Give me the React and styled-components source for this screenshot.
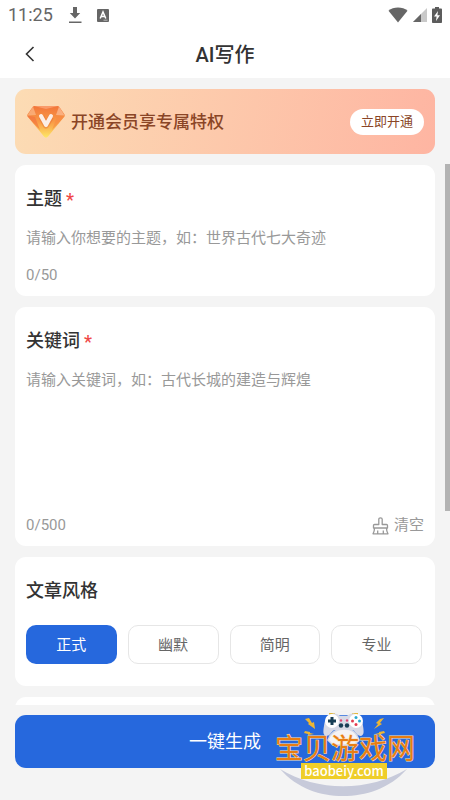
import { useState } from "react";
import styled, { createGlobalStyle } from "styled-components";

const GlobalStyle = createGlobalStyle`
  * {
    box-sizing: border-box;
  }

  body {
    margin: 0;
    font-family: Roboto, "Noto Sans CJK SC", sans-serif;
    color: #333;
  }

  button,
  textarea {
    font-family: inherit;
  }
`;

const Page = styled.div`
  height: 100vh;
  display: flex;
  flex-direction: column;
  background: #f4f4f4;
  overflow: hidden;
`;

const StatusBar = styled.div`
  display: flex;
  align-items: center;
  justify-content: space-between;
  height: 30px;
  padding: 0 8px;
  background: #fff;
  color: #666;
`;

const StatusGroup = styled.div`
  display: flex;
  align-items: center;
  gap: ${({ $gap }) => $gap}px;
`;

const Time = styled.span`
  font-size: 18px;
  line-height: 24px;
`;

const NavBar = styled.header`
  display: grid;
  grid-template-columns: 60px 1fr 60px;
  align-items: center;
  height: 48px;
  background: #fff;
`;

const BackButton = styled.button`
  display: flex;
  align-items: center;
  justify-content: center;
  height: 48px;
  padding: 0;
  border: none;
  background: none;
  color: #333;
`;

const PageTitle = styled.h1`
  margin: 0;
  padding-top: 2px;
  font-size: 20px;
  line-height: 28px;
  font-weight: 500;
  text-align: center;
`;

const Content = styled.main`
  position: relative;
  flex: 1;
  min-height: 0;
  display: flex;
  flex-direction: column;
  gap: 11px;
  padding: 11px 15px 0;
  overflow: hidden;
`;

const ScrollThumb = styled.div`
  position: absolute;
  top: 86px;
  right: 0;
  width: 5px;
  height: 347px;
  background: #b3b3b3;
`;

const Banner = styled.section`
  flex: none;
  display: flex;
  align-items: center;
  height: 65px;
  padding: 0 11px;
  border-radius: 11px;
  background: linear-gradient(100deg, #fcdcb4, #feb5a2);
  color: #8a4526;
`;

const BannerText = styled.span`
  flex: 1;
  margin-left: 5px;
  font-size: 17px;
  line-height: 24px;
  font-weight: 500;
`;

const BannerButton = styled.button`
  height: 26px;
  padding: 0 11px;
  border: none;
  border-radius: 13px;
  background: #fff;
  color: #8a4526;
  font-size: 13px;
  line-height: 20px;
`;

const Card = styled.section`
  flex: none;
  min-height: 60px;
  padding: 22px 11px 10px;
  border-radius: 11px;
  background: #fff;
`;

const CardTitle = styled.h2`
  display: flex;
  align-items: center;
  gap: 4px;
  margin: 0;
  font-size: 18px;
  line-height: 24px;
  font-weight: 500;
`;

const Required = styled.span`
  padding-top: 2px;
  color: #f04848;
  line-height: 22px;
`;

const TextField = styled.textarea`
  display: block;
  width: 100%;
  height: ${({ $height }) => $height}px;
  margin: 16px 0;
  padding: 0;
  border: none;
  outline: none;
  resize: none;
  overflow: hidden;
  background: none;
  color: #333;
  font-size: 15px;
  line-height: 22px;

  &::placeholder {
    color: #999;
  }
`;

const CardFooter = styled.div`
  display: flex;
  align-items: center;
  justify-content: space-between;
  height: 21px;
  color: #999;
  font-size: 15px;
  line-height: 21px;
`;

const ClearButton = styled.button`
  display: flex;
  align-items: center;
  gap: 5px;
  padding: 0;
  border: none;
  background: none;
  color: #999;
  font-size: 15px;
  line-height: 21px;
`;

const StyleGroup = styled.div`
  display: grid;
  grid-template-columns: repeat(4, 1fr);
  gap: 11px;
  padding: 22px 2px 12px 0;
`;

const StyleButton = styled.button`
  height: 39px;
  padding: 0;
  border: ${({ $active }) => ($active ? "none" : "1px solid #e6e6e6")};
  border-radius: 10px;
  background: ${({ $active }) => ($active ? "#2668dd" : "#fff")};
  color: ${({ $active }) => ($active ? "#fff" : "#666")};
  font-size: 15px;
  line-height: 22px;
`;

const BottomBar = styled.footer`
  position: relative;
  flex: none;
  padding: 10px 15px 32px;
`;

const SubmitButton = styled.button`
  display: block;
  width: 100%;
  height: 53px;
  border: none;
  border-radius: 11px;
  background: #2668dd;
  color: #fff;
  font-size: 18px;
  line-height: 24px;
`;

const Watermark = styled.div`
  position: absolute;
  right: 34px;
  bottom: 4px;
  width: 142px;
  height: 90px;
  pointer-events: none;
`;

const LogoText = styled.text`
  font-family: "Noto Sans CJK SC", sans-serif;
`;

function DownloadIcon() {
  return (
    <svg width="14" height="17" viewBox="0 0 14 17" fill="currentColor">
      <path d="M5 0h4v6h3.200L7 11.500 1.800 6H5z" />
      <path d="M1 14.500h12.500V16H1z" />
    </svg>
  );
}

function LanguageIcon() {
  return (
    <svg width="12" height="13" viewBox="0 0 12 13">
      <rect width="12" height="13" rx="1" fill="#666" />
      <path d="M3.200 9.500 6 3l2.800 6.500M4.200 7.500h3.600" fill="none" stroke="#fff" strokeWidth="1.500" />
      <path d="M6.500 11.200h4" stroke="#bbb" strokeWidth="1" />
    </svg>
  );
}

function WifiIcon() {
  return (
    <svg width="20" height="16" viewBox="0 0 20 16">
      <path d="M10 15.500.500 3.800C3 1.600 6.400.500 10 .500s7 1.100 9.500 3.300z" fill="#666" />
    </svg>
  );
}

function SignalIcon() {
  return (
    <svg width="14" height="14" viewBox="0 0 14 14">
      <path d="M14 0v14H0z" fill="#c9c9c9" />
      <path d="M8 6v8H0z" fill="#666" />
    </svg>
  );
}

function BatteryIcon() {
  return (
    <svg width="10" height="16" viewBox="0 0 10 16">
      <path d="M3 0h4v1.600h2.200c.500 0 .8.300.8.800v12.800c0 .500-.300.800-.8.800H.800c-.500 0-.8-.300-.8-.8V2.400c0-.500.300-.8.8-.8H3z" fill="#5c5c5c" />
      <path d="M6 4 2 9.500h2.600L4 14l4-5.800H5.400z" fill="#fff" />
    </svg>
  );
}

function BackIcon() {
  return (
    <svg width="10" height="16" viewBox="0 0 10 16" fill="none" stroke="currentColor" strokeWidth="1.600">
      <path d="M8.500 1 1.500 8l7 7" />
    </svg>
  );
}

function DiamondIcon() {
  return (
    <svg width="40" height="34" viewBox="0 0 40 34">
      <defs>
        <linearGradient id="gem" x1="0" y1="0" x2="0" y2="1">
          <stop offset="0" stopColor="#f2763b" />
          <stop offset="0.500" stopColor="#f99a47" />
          <stop offset="1" stopColor="#fde866" />
        </linearGradient>
      </defs>
      <path d="M8.500 1h23c.8 0 1.400.400 1.900 1l5 7.200c.500.800.500 1.700-.200 2.500L22 31.500c-1.300 1.500-2.700 1.500-4 0L1.800 11.700c-.7-.8-.7-1.700-.2-2.500L6.600 2c.5-.6 1.100-1 1.900-1z" fill="url(#gem)" />
      <path d="M1.400 10.500 9 12l5 13L1.800 11.700z" fill="#f2703f" opacity="0.600" />
      <path d="M38.600 10.500 31 12l-5 13 12.200-13.300z" fill="#f98b45" opacity="0.600" />
      <path d="M7 1.500 10 10l-8.500.500z" fill="#fbb98a" opacity="0.700" />
      <path d="m33 1.500-3 8.500 8.500.500z" fill="#fcc09b" opacity="0.700" />
      <path d="M8 1h24L20 4z" fill="#fa9a69" />
      <path d="m15.500 12 4.500 8.500L25 12" fill="none" stroke="#e0602a" strokeOpacity="0.350" strokeWidth="6" strokeLinejoin="round" />
      <path d="m15 11 5 9 5-9" fill="none" stroke="#fbeee6" strokeWidth="4" strokeLinecap="round" strokeLinejoin="round" />
    </svg>
  );
}

function BroomIcon() {
  return (
    <svg width="17" height="18" viewBox="0 0 17 18" fill="none" stroke="currentColor" strokeWidth="1.300" strokeLinejoin="round">
      <path d="M6.800 7.500V2.300c0-.9.600-1.500 1.700-1.500s1.700.600 1.700 1.500v5.200h4.300c.6 0 1 .400 1 1V11h-14V8.500c0-.6.400-1 1-1z" />
      <path d="M2.500 11c0 2.500-.4 4.200-1.500 5.800h15c-1.100-1.600-1.500-3.300-1.500-5.800M5.700 16.500v-3M11.300 16.500v-3" />
    </svg>
  );
}

function SiteLogo() {
  return (
    <svg width="142" height="90" viewBox="0 0 142 90">
      <circle cx="69" cy="22" r="17" fill="#f0f0ef" opacity="0.250" />
      <path d="M6 63c37 23 89 23 127 0-18 20-41 27-64 27S24 83 6 63z" fill="#c7cada" />
      <path d="M55 8h6M78 8h6" stroke="#e4b93c" strokeWidth="2" />
      <path d="M58 8c3-1 6 0 8 2h7c2-2 5-3 8-2 5 1 7 5 8 12 1 6 1 9-2 10-4 0-5-4-8-6H60c-3 2-4 6-8 6-3-1-3-4-2-10 1-7 3-11 8-12z" fill="#d8dae6" />
      <path d="M54 34c3-8 8-11 16-11s12 3 15 11l-5 5H59z" fill="#f5f3f4" stroke="#d8dae6" strokeWidth="1.500" />
      <circle cx="58" cy="15" r="7" fill="#fff" />
      <circle cx="82" cy="15" r="7" fill="#fff" />
      <path d="M58 11v8M54 15h8" stroke="#183e55" strokeWidth="3" />
      <circle cx="82" cy="11.500" r="1.500" fill="#2aaad0" />
      <circle cx="82" cy="18.500" r="1.500" fill="#e53c50" />
      <circle cx="78.500" cy="15" r="1.500" fill="#df4053" />
      <circle cx="85.500" cy="15" r="1.500" fill="#2aaad0" />
      <circle cx="67" cy="14.500" r="1.200" fill="#df4874" />
      <circle cx="73" cy="14.500" r="1.200" fill="#df4874" />
      <circle cx="67" cy="19.500" r="2.200" fill="#183e55" />
      <circle cx="73" cy="19.500" r="2.200" fill="#183e55" />
      <path
        d="m31 13 4-1 3 5 2-1 1 7-7-5 1-1zM110 12l-4 1-4 4 2 1-4 5 8-5-2-1zM31 25l5 1v1l4 1-6 1v-1l-4-1zM110 25l-5 1v1l-4 1 6 1v-1l4-1z"
        fill="#edb634"
      />
      <LogoText x="1" y="53" fontSize="28" fill="#e87d12" stroke="#f8dfb9" strokeWidth="1" paintOrder="stroke">
        宝贝游戏网
      </LogoText>
      <rect x="27" y="57" width="86" height="16" fill="#efce29" />
      <LogoText x="70" y="70" textAnchor="middle" fontSize="13" fontWeight="500" fill="#fff">
        baobeiy.com
      </LogoText>
    </svg>
  );
}

const styles = ["正式", "幽默", "简明", "专业"];

export default function App() {
  const [topic, setTopic] = useState("");
  const [keywords, setKeywords] = useState("");
  const [activeStyle, setActiveStyle] = useState("正式");

  return (
    <>
      <GlobalStyle />
      <Page>
        <StatusBar>
          <StatusGroup $gap={15}>
            <Time>11:25</Time>
            <DownloadIcon />
            <LanguageIcon />
          </StatusGroup>
          <StatusGroup $gap={5}>
            <WifiIcon />
            <SignalIcon />
            <BatteryIcon />
          </StatusGroup>
        </StatusBar>
        <NavBar>
          <BackButton aria-label="返回">
            <BackIcon />
          </BackButton>
          <PageTitle>AI写作</PageTitle>
        </NavBar>

        <Content>
          <Banner>
            <DiamondIcon />
            <BannerText>开通会员享专属特权</BannerText>
            <BannerButton>立即开通</BannerButton>
          </Banner>

          <Card>
            <CardTitle as="label" htmlFor="topic">
              主题 <Required>*</Required>
            </CardTitle>
            <TextField
              id="topic"
              $height={22}
              maxLength={50}
              placeholder="请输入你想要的主题，如：世界古代七大奇迹"
              value={topic}
              onChange={(event) => setTopic(event.target.value)}
            />
            <CardFooter>{topic.length}/50</CardFooter>
          </Card>

          <Card>
            <CardTitle as="label" htmlFor="keywords">
              关键词 <Required>*</Required>
            </CardTitle>
            <TextField
              id="keywords"
              $height={130}
              maxLength={500}
              placeholder="请输入关键词，如：古代长城的建造与辉煌"
              value={keywords}
              onChange={(event) => setKeywords(event.target.value)}
            />
            <CardFooter>
              {keywords.length}/500
              <ClearButton onClick={() => setKeywords("")}>
                <BroomIcon />
                清空
              </ClearButton>
            </CardFooter>
          </Card>

          <Card>
            <CardTitle>文章风格</CardTitle>
            <StyleGroup>
              {styles.map((name) => (
                <StyleButton
                  key={name}
                  $active={name === activeStyle}
                  onClick={() => setActiveStyle(name)}
                >
                  {name}
                </StyleButton>
              ))}
            </StyleGroup>
          </Card>

          <Card />
          <ScrollThumb />
        </Content>

        <BottomBar>
          <SubmitButton>一键生成</SubmitButton>
          <Watermark>
            <SiteLogo />
          </Watermark>
        </BottomBar>
      </Page>
    </>
  );
}
